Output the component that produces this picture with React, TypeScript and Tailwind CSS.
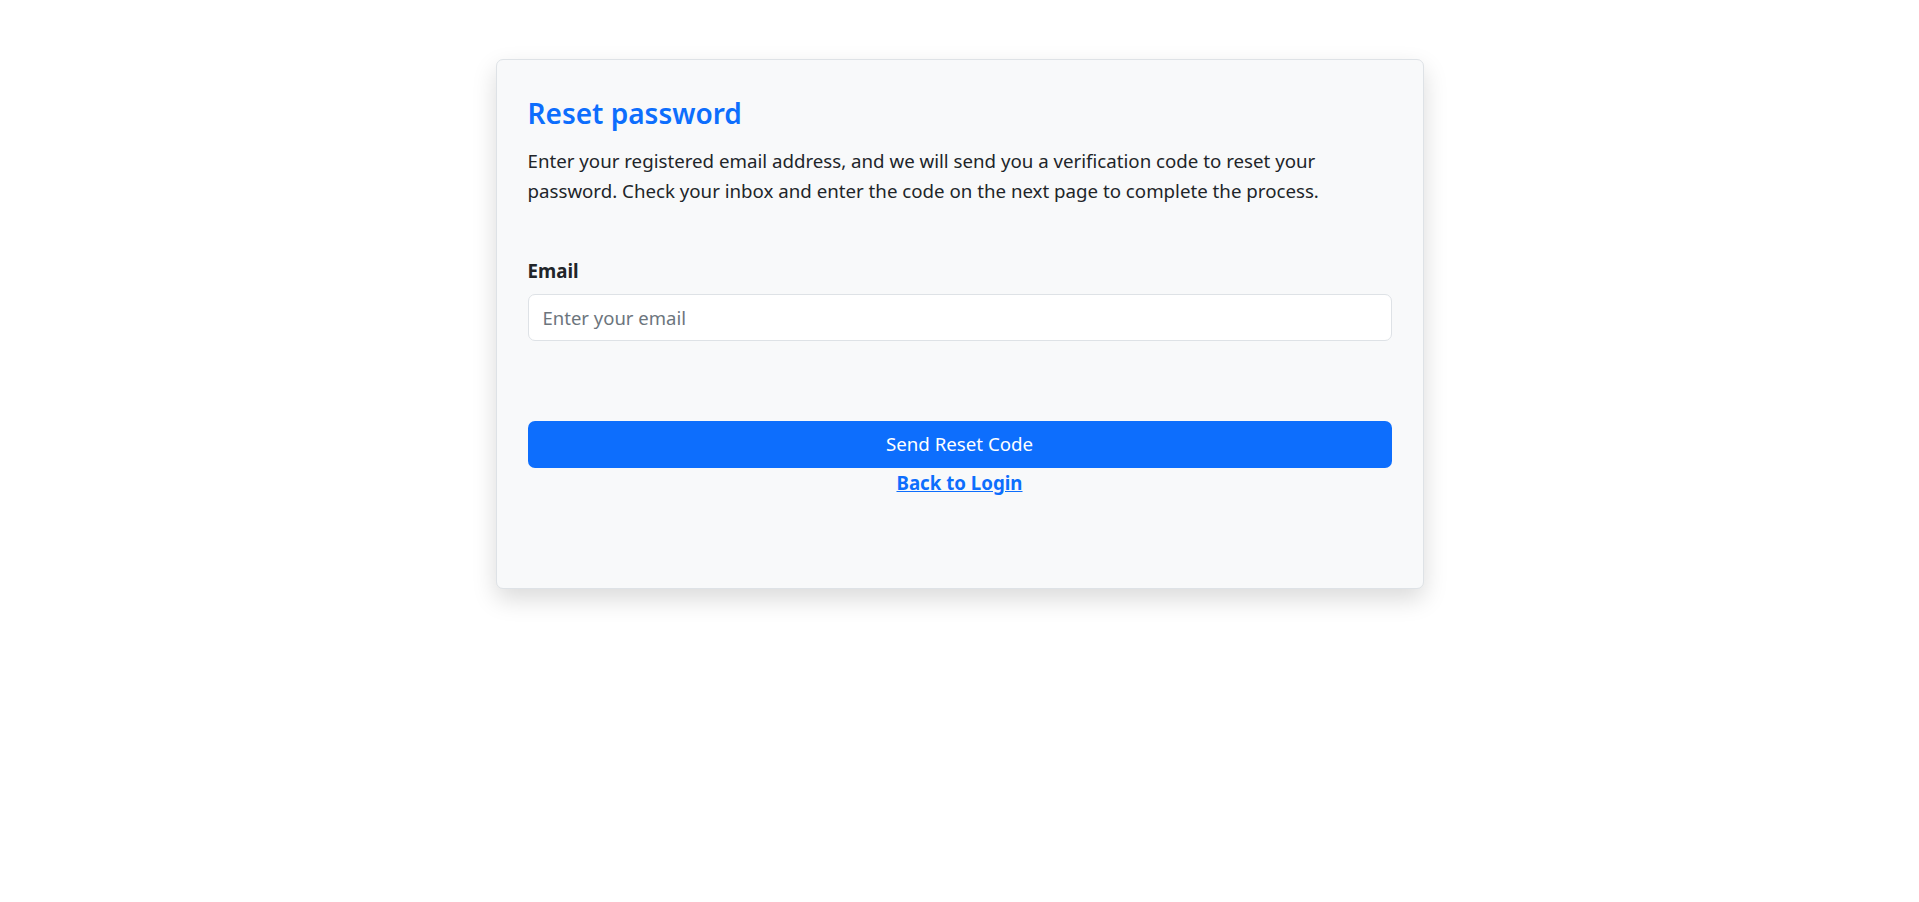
export default function App() {
  return (
    <div className="min-h-screen bg-white pt-[59px] font-['Noto_Sans',sans-serif] text-[#212529]">
      <div className="mx-auto w-[928px] rounded-[7px] border border-[#dee2e6] bg-[#f8f9fa] px-[31px] pt-[35px] pb-[89px] shadow-[0_10px_24px_rgba(0,0,0,0.15)]">
        {/* Header */}
        <h2 className="text-[28px] font-semibold leading-[36px] text-[#0d6efd]">Reset password</h2>
        <p className="mt-[15px] text-[18.7px] leading-[30px]">
          Enter your registered email address, and we will send you a verification code to reset your
          <br />
          password. Check your inbox and enter the code on the next page to complete the process.
        </p>

        {/* Form */}
        <form className="mt-[50px]" onSubmit={(e) => e.preventDefault()}>
          <label htmlFor="email" className="block text-[18.7px] font-bold leading-[30px]">
            Email
          </label>
          <input
            id="email"
            type="email"
            placeholder="Enter your email"
            className="mt-[8px] block h-[47px] w-full rounded-[7px] border border-[#dee2e6] bg-white px-[14px] text-[18.5px] text-[#212529] placeholder:text-[#6c757d] outline-none"
          />
          <button
            type="submit"
            className="mt-[80px] block h-[47px] w-full rounded-[7px] bg-[#0d6efd] text-[18.7px] text-white"
          >
            Send Reset Code
          </button>
          <div className="text-center leading-[30px]">
            <a href="#" className="text-[18.7px] font-bold text-[#0d6efd] underline">
              Back to Login
            </a>
          </div>
        </form>
      </div>
    </div>
  );
}
